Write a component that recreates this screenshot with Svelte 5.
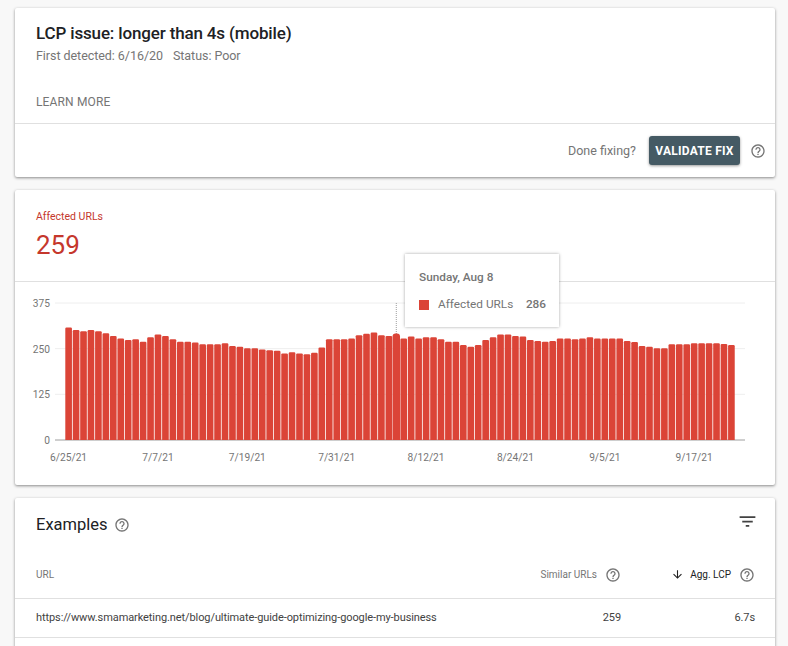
<script lang="ts">
	const helpPath =
		'M11 18h2v-2h-2v2zm1-16C6.48 2 2 6.48 2 12s4.48 10 10 10 10-4.48 10-10S17.52 2 12 2zm0 18c-4.41 0-8-3.59-8-8s3.59-8 8-8 8 3.59 8 8-3.59 8-8 8zm0-14c-2.21 0-4 1.79-4 4h2c0-1.1.9-2 2-2s2 .9 2 2c0 2-3 1.75-3 5h2c0-2.25 3-2.5 3-5 0-2.21-1.79-4-4-4z';

	// daily affected URL counts, 6/25/21 onwards
	const counts = [
		308, 301, 298, 301, 298, 292, 285, 278, 274, 276, 269, 281, 289, 285, 276, 269, 269, 267, 262,
		262, 262, 265, 257, 255, 251, 251, 248, 246, 244, 237, 240, 237, 235, 239, 253, 276, 276, 276,
		278, 287, 291, 294, 287, 285, 286, 278, 283, 278, 281, 281, 276, 269, 269, 260, 255, 260, 274,
		281, 289, 289, 285, 283, 274, 271, 269, 271, 278, 278, 276, 278, 281, 278, 278, 278, 278, 271,
		268, 257, 255, 251, 251, 262, 262, 262, 265, 265, 265, 265, 263, 260
	];
	const HOVER = 44;
	const BASE = 158;
	const LEFT = 50.3;
	const PITCH = 7.447;
	const BAR_W = 6.65;
	const PX_PER_URL = 137 / 375;

	const ticks = [375, 250, 125, 0];
	const dates = ['6/25/21', '7/7/21', '7/19/21', '7/31/21', '8/12/21', '8/24/21', '9/5/21', '9/17/21'];

	function barPath(i: number, n: number) {
		// the hovered bar swells a little and gets a rounder top
		const grow = i === HOVER ? 0.4 : 0;
		const x = LEFT + i * PITCH - grow;
		const w = BAR_W + grow * 2;
		const top = BASE - n * PX_PER_URL - (i === HOVER ? 2 : 0);
		const r = i === HOVER ? 3 : 1.2;
		return `M${x} ${BASE}V${top + r}Q${x} ${top} ${x + r} ${top}H${x + w - r}Q${x + w} ${top} ${x + w} ${top + r}V${BASE}Z`;
	}
</script>

{#snippet help()}
	<svg class="help" viewBox="0 0 24 24" width="16" height="16" aria-hidden="true"><path d={helpPath} /></svg>
{/snippet}

<div class="page">
	<section class="card issue">
		<div class="issue-body">
			<h1>LCP issue: longer than 4s (mobile)</h1>
			<p class="meta"><span>First detected: 6/16/20</span><span>Status: Poor</span></p>
			<a class="learn" href="#learn">LEARN MORE</a>
		</div>
		<div class="issue-foot">
			<span class="done">Done fixing?</span>
			<button class="validate">VALIDATE FIX</button>
			{@render help()}
		</div>
	</section>

	<section class="card summary">
		<div class="tile">
			<div class="tile-label">Affected URLs</div>
			<div class="tile-value">259</div>
		</div>
		<div class="chart">
			<svg viewBox="0 0 760 203" width="760" height="203">
				{#each ticks as t}
					{@const y = BASE - t * PX_PER_URL}
					<line class={t === 0 ? 'axis' : 'grid'} x1="40" x2="730" y1={y} y2={y} />
					<text class="tick" x="35" y={y + 4} text-anchor="end">{t}</text>
				{/each}
				<line class="cursor" x1={LEFT + HOVER * PITCH + BAR_W / 2} x2={LEFT + HOVER * PITCH + BAR_W / 2} y1="21" y2="55" />
				{#each counts as n, i}
					<path class="bar" d={barPath(i, n)} />
				{/each}
				{#each dates as d, i}
					<text class="tick" x={LEFT + i * 12 * PITCH + 3.3} y="179" text-anchor="middle">{d}</text>
				{/each}
			</svg>
		</div>
		<div class="tooltip">
			<div class="tip-date">Sunday, Aug 8</div>
			<div class="tip-row">
				<i class="swatch"></i>
				<span class="tip-name">Affected URLs</span>
				<span class="tip-num">286</span>
			</div>
		</div>
	</section>

	<section class="card examples">
		<div class="ex-head">
			<h2>Examples</h2>
			{@render help()}
			<svg class="filter" viewBox="0 0 24 24" width="21" height="21" aria-hidden="true"><path d="M10 18h4v-2h-4v2zM3 6v2h18V6H3zm3 7h12v-2H6v2z" /></svg>
		</div>
		<div class="row thead">
			<div class="url-col">URL</div>
			<div class="num-col">Similar URLs {@render help()}</div>
			<div class="num-col sorted">
				<svg class="arrow" viewBox="0 0 24 24" width="13" height="13" aria-hidden="true"><path d="M20 12l-1.41-1.41L13 16.17V4h-2v12.17l-5.58-5.59L4 12l8 8 8-8z" /></svg>
				Agg. LCP {@render help()}
			</div>
		</div>
		<div class="row tbody">
			<div>https://www.smamarketing.net/blog/ultimate-guide-optimizing-google-my-business</div>
			<div class="num-col">259</div>
			<div class="num-col">6.7s</div>
		</div>
	</section>
</div>

<style>
	:global(body) {
		margin: 0;
		background: #f8f8f8;
	}
	.page {
		height: 646px;
		overflow: hidden;
		box-sizing: border-box;
		padding: 8px 13px 0 15px;
		display: flex;
		flex-direction: column;
		gap: 13px;
		font-family: Roboto, 'Liberation Sans', sans-serif;
		color: #212121;
	}
	.card {
		position: relative;
		flex: none;
		background: #fff;
		border-radius: 2px;
		box-shadow: 0 1px 3px rgba(0, 0, 0, 0.45);
	}

	.issue-body {
		height: 116px;
		box-sizing: border-box;
		padding: 15px 21px 0;
		border-bottom: 1px solid #e0e0e0;
	}
	h1 {
		margin: 0;
		font-size: 17px;
		line-height: 20px;
		font-weight: 500;
		letter-spacing: -0.15px;
		color: #202124;
	}
	.meta {
		display: flex;
		gap: 10px;
		margin: 5px 0 0;
		font-size: 12.5px;
		letter-spacing: -0.05px;
		line-height: 16px;
		color: #757575;
	}
	.learn {
		display: block;
		margin-top: 30px;
		font-size: 12px;
		line-height: 16px;
		letter-spacing: 0.15px;
		color: #757575;
		text-decoration: none;
	}
	.issue-foot {
		height: 53px;
		display: flex;
		align-items: center;
		justify-content: flex-end;
		padding-right: 9px;
	}
	.done {
		font-size: 12.5px;
		color: #757575;
		margin-right: 13px;
	}
	.validate {
		width: 91px;
		height: 29px;
		padding: 0;
		margin-right: 10px;
		border: 0;
		border-radius: 3px;
		background: #455a64;
		color: #fff;
		font: 700 12px Roboto, sans-serif;
		letter-spacing: 0.25px;
		box-shadow: 0 1px 3px rgba(0, 0, 0, 0.4);
	}
	.help {
		flex: none;
		fill: #757575;
	}

	.summary {
		height: 295px;
	}
	.tile {
		height: 92px;
		box-sizing: border-box;
		padding: 20px 21px 0;
		border-bottom: 1px solid #e0e0e0;
		color: #c5372c;
	}
	.tile-label {
		font-size: 10.5px;
		line-height: 13px;
	}
	.tile-value {
		margin-top: 7px;
		font-size: 26px;
		line-height: 30px;
	}
	.chart svg {
		display: block;
	}
	.grid {
		stroke: #eeeeee;
	}
	.axis {
		stroke: #9e9e9e;
	}
	.tick {
		font-size: 10.2px;
		fill: #757575;
	}
	.cursor {
		stroke: #9e9e9e;
		stroke-dasharray: 1 1;
	}
	.bar {
		fill: #db4437;
	}
	.tooltip {
		position: absolute;
		left: 390px;
		top: 64px;
		width: 154px;
		height: 73px;
		box-sizing: border-box;
		padding: 16px 13px 0 14px;
		background: #fff;
		box-shadow: 0 0 3px rgba(0, 0, 0, 0.35);
		color: #757575;
		font-size: 11.8px;
	}
	.tip-date {
		font-weight: 500;
		line-height: 15px;
	}
	.tip-row {
		display: flex;
		align-items: center;
		margin-top: 12px;
		line-height: 15px;
	}
	.swatch {
		width: 10px;
		height: 10px;
		margin-right: 9px;
		background: #db4437;
	}
	.tip-num {
		margin-left: auto;
		font-weight: 500;
	}

	.examples {
		height: 200px;
	}
	.ex-head {
		height: 55px;
		box-sizing: border-box;
		padding: 0 20px 2px 21px;
		display: flex;
		align-items: center;
		gap: 6px;
	}
	h2 {
		margin: 0;
		font-size: 16.5px;
		font-weight: 400;
		color: #202124;
	}
	.filter {
		margin: -7px -3px 0 auto;
		fill: #424242;
	}
	.row {
		display: grid;
		grid-template-columns: 1fr 120px 134px;
		align-items: center;
		box-sizing: border-box;
		padding: 0 20px 2px 21px;
		border-bottom: 1px solid #e0e0e0;
		font-size: 11px;
	}
	.thead {
		height: 46px;
		color: #757575;
		font-size: 10px;
	}
	.tbody {
		height: 39px;
		color: #424242;
		letter-spacing: -0.09px;
	}
	.num-col {
		display: flex;
		align-items: center;
		justify-content: flex-end;
		gap: 8px;
	}
	.sorted {
		color: #212121;
	}
	.arrow {
		margin-right: -2px;
		fill: #212121;
	}
</style>
